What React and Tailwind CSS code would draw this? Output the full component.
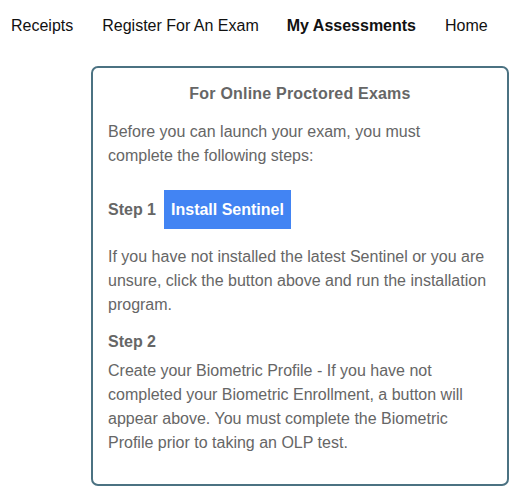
export default function App() {
  return (
    <div className="w-[524px] h-[497px] bg-white" style={{ fontFamily: '"Liberation Sans", Arial, sans-serif' }}>
      <nav className="flex items-center h-[48px] pt-[3px] pl-[11px] text-[16px] text-[#111]">
        <span>Receipts</span>
        <span className="ml-[29px]">Register For An Exam</span>
        <span className="ml-[28px] font-bold">My Assessments</span>
        <span className="ml-[29px]">Home</span>
      </nav>
      <div className="ml-[91px] mt-[18px] w-[418px] h-[420px] border-2 border-[#4b7282] rounded-[7px] px-[15px] pt-[14px] text-[16px] leading-[24px] text-[#666]">
        <div className="text-center font-bold tracking-[0.2px]">For Online Proctored Exams</div>
        <p className="mt-[14px]">Before you can launch your exam, you must<br />complete the following steps:</p>
        <div className="mt-[22px] flex items-center gap-[8px]">
          <span className="font-bold">Step 1</span>
          <button className="bg-[#4284f3] text-white font-bold px-[7px] h-[39px] leading-[24px]">Install Sentinel</button>
        </div>
        <p className="mt-[16px]">If you have not installed the latest Sentinel or you are unsure, click the button above and run the installation program.</p>
        <div className="mt-[13px] font-bold">Step 2</div>
        <p className="mt-[5px]">Create your Biometric Profile - If you have not completed your Biometric Enrollment, a button will appear above. You must complete the Biometric Profile prior to taking an OLP test.</p>
      </div>
    </div>
  );
}
